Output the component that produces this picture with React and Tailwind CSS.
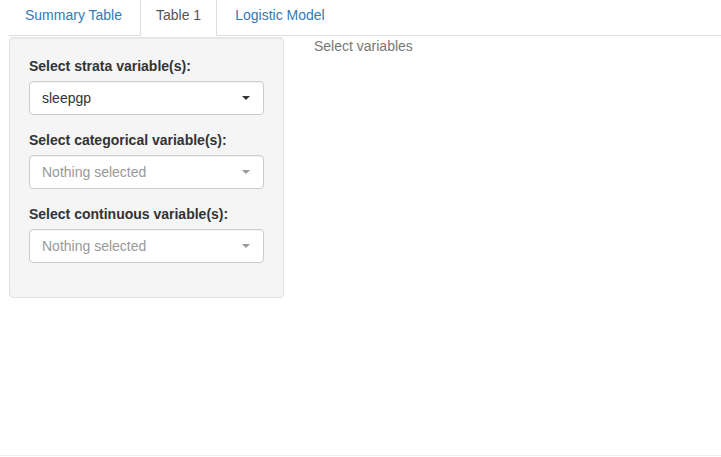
import React from "react";

function Caret({ color }) {
  return (
    <span
      className="ml-auto h-0 w-0 border-x-4 border-t-4 border-x-transparent"
      style={{ borderTopColor: color }}
    />
  );
}

function PickerInput({ label, value, placeholder }) {
  return (
    <div className="mb-[15px]">
      <label className="mb-[5px] block text-[14px] font-bold leading-5 text-[#333]">{label}</label>
      <div className="flex h-[34px] w-full items-center rounded border border-[#ccc] bg-white px-3 shadow-[inset_0_1px_1px_rgba(0,0,0,0.04)]">
        {value ? (
          <span className="text-[14px] text-[#333]">{value}</span>
        ) : (
          <span className="text-[14px] text-[#999]">{placeholder}</span>
        )}
        <span className="ml-auto mr-[1px] flex">
          <Caret color={value ? "#333" : "#999"} />
        </span>
      </div>
    </div>
  );
}

export default function App() {
  const tabs = ["Summary Table", "Table 1", "Logistic Model"];
  const active = "Table 1";

  return (
    <div
      className="relative h-[457px] w-[721px] overflow-hidden bg-white text-[14px] leading-5 text-[#333]"
      style={{ fontFamily: '"Liberation Sans", Arial, sans-serif' }}
    >
      <ul className="ml-[9px] mt-[-6px] flex border-b border-[#ddd]">
        {tabs.map((t) => (
          <li key={t} className="mb-[-1px] mr-[2px]">
            <a
              className={`block rounded-t border px-[15px] py-[10px] leading-5 ${
                t === active
                  ? "border-[#ddd] border-b-transparent bg-white text-[#555]"
                  : "border-transparent text-[#337ab7]"
              }`}
            >
              {t}
            </a>
          </li>
        ))}
      </ul>

      <div className="mt-[1px] flex items-start">
        <div className="ml-[9px] w-[275px] rounded border border-[#e3e3e3] bg-[#f5f5f5] px-[19px] pb-[19px] pt-[18px] shadow-[inset_0_1px_1px_rgba(0,0,0,0.05)]">
          <PickerInput label="Select strata variable(s):" value="sleepgp" />
          <PickerInput label="Select categorical variable(s):" placeholder="Nothing selected" />
          <PickerInput label="Select continuous variable(s):" placeholder="Nothing selected" />
        </div>
        <div className="ml-[30px] text-[#777]">
          <div className="-mt-[1px]">Select variables</div>
        </div>
      </div>

      <div className="absolute bottom-[1px] left-0 h-px w-full bg-[#eee]" />
    </div>
  );
}
